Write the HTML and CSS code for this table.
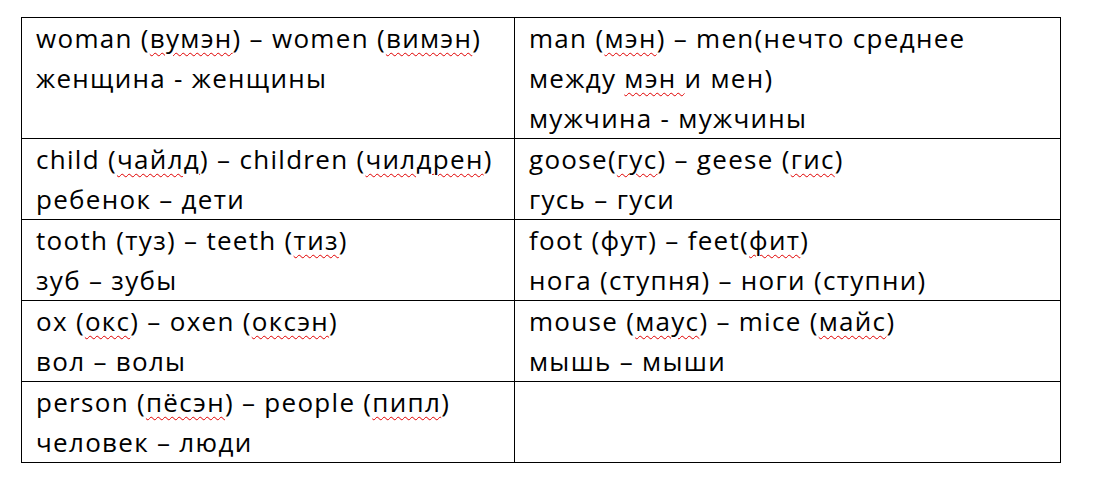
FILE: index.html
```html
<!DOCTYPE html>
<html lang="ru">
<head>
<meta charset="utf-8">
<title>Plural nouns</title>
<link rel="stylesheet" href="styles.css">
</head>
<body>
<div class="page">
<table class="words">
<colgroup><col class="col-left"><col class="col-right"></colgroup>
<tr>
<td><div class="line">woman (<span class="sp">вумэн</span>) – women (<span class="sp">вимэн</span>)</div><div class="line">женщина - женщины</div></td>
<td><div class="line">man (<span class="sp">мэн</span>) – men(нечто среднее</div><div class="line">между <span class="sp">мэн </span>и мен)</div><div class="line">мужчина - мужчины</div></td>
</tr>
<tr>
<td><div class="line">child (<span class="sp">чайлд</span>) – children (<span class="sp">чилдрен</span>)</div><div class="line">ребенок – дети</div></td>
<td><div class="line">goose(<span class="sp">гус</span>) – geese (<span class="sp">гис</span>)</div><div class="line">гусь – гуси</div></td>
</tr>
<tr>
<td><div class="line">tooth (туз) – teeth (<span class="sp">тиз</span>)</div><div class="line">зуб – зубы</div></td>
<td><div class="line">foot (фут) – feet(<span class="sp">фит</span>)</div><div class="line">нога (ступня) – ноги (ступни)</div></td>
</tr>
<tr>
<td><div class="line">ox (<span class="sp">окс</span>) – oxen (<span class="sp">оксэн</span>)</div><div class="line">вол – волы</div></td>
<td><div class="line">mouse (<span class="sp">маус</span>) – mice (<span class="sp">майс</span>)</div><div class="line">мышь – мыши</div></td>
</tr>
<tr>
<td><div class="line">person (<span class="sp">пёсэн</span>) – people (<span class="sp">пипл</span>)</div><div class="line">человек – люди</div></td>
<td></td>
</tr>
</table>
</div>
</body>
</html>
```

FILE: styles.css
```css
html, body {
  margin: 0;
  padding: 0;
  background: #fff;
}
.page {
  padding: 17px 0 0 21px;
}
.words {
  border-collapse: collapse;
  table-layout: fixed;
  width: 1039px;
  font-family: "Open Sans", "Noto Sans", "Liberation Sans", sans-serif;
  font-size: 26px;
  letter-spacing: 1.3px;
  color: #000;
}
.col-left { width: 493px; }
.col-right { width: 546px; }
.words td {
  border: 1px solid #000;
  padding: 0 8px 0 14px;
  vertical-align: top;
  height: 80px;
}
.line {
  height: 40px;
  line-height: 40px;
  white-space: nowrap;
}
.sp {
  text-decoration: underline wavy #e00000;
  text-decoration-thickness: 1px;
  text-underline-offset: 4px;
}
```
